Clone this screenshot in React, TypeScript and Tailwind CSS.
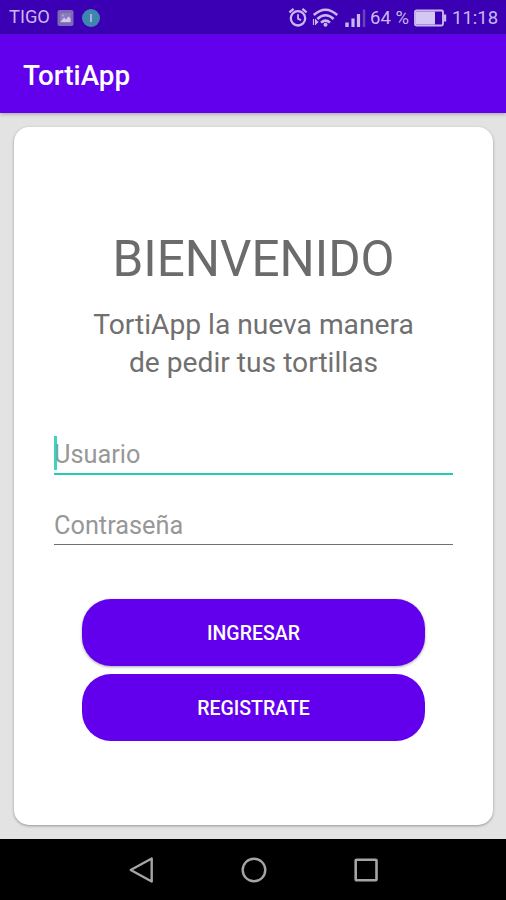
import { useState } from "react";

const StatusBar = () => {
  return (
    <div className="h-[34px] bg-[#3b00b3] text-[#c9b8f0] flex items-center pt-px text-[18px] leading-none">
      <span className="ml-[9px] w-[48px] whitespace-nowrap text-[18.3px]">TIGO</span>
      <svg width="17" height="16" viewBox="0 0 17 16" className="shrink-0">
        <rect x="0.5" y="0" width="16" height="16" rx="2" fill="#7d68b4" />
        <rect x="3" y="3" width="11" height="10" fill="#8c7ac0" />
        <path d="M3.5 12 L7 7.5 L9 9.5 L11.5 6.5 L13.5 8.5 V12 Z" fill="#d3c8ef" />
        <circle cx="6" cy="5.5" r="1" fill="#b5a5dd" />
      </svg>
      <svg width="18" height="18" viewBox="0 0 18 18" className="ml-[8px] shrink-0">
        <circle cx="9" cy="9" r="9" fill="#3f86ae" />
        <path d="M9 5 V13" stroke="#b9c4e6" strokeWidth="1.6" />
      </svg>

      {/* System icons */}
      <svg width="80" height="22" viewBox="0 0 80 22" fill="none" stroke="currentColor" className="ml-[187px] mb-px shrink-0">
        <circle cx="11" cy="12.3" r="7.2" strokeWidth="2.3" />
        <path d="M11 8.3 V12.6 L14 14.2" strokeWidth="1.8" />
        <path d="M2.4 6.4 L6.6 2.9 M19.6 6.4 L15.4 2.9" strokeWidth="2.2" />
        <path d="M26.8 9 Q38.5 -1.4 50.2 9" strokeWidth="2.5" />
        <path d="M30.4 13 Q38.5 5.4 46.6 13" strokeWidth="2.5" />
        <path d="M34 16.6 Q38.5 12.6 43 16.6" strokeWidth="2.5" />
        <circle cx="38.5" cy="18.7" r="2" fill="currentColor" stroke="none" />
        <path d="M26.5 13 V19" strokeWidth="1.2" />
        <path d="M28 12.5 L31.5 16 L28 19.5 Z" fill="currentColor" stroke="none" />
        <path d="M60 16.5 V21" strokeWidth="3.4" />
        <path d="M66 12.5 V21" strokeWidth="3.2" />
        <path d="M71.5 8 V21" strokeWidth="3.2" />
        <path d="M77 3.5 V21" strokeWidth="2.5" stroke="#6841c4" />
      </svg>
      <span className="ml-[3px] w-[44px] whitespace-nowrap text-[18.5px] pt-px">64 %</span>
      <svg width="33" height="18" viewBox="0 0 33 18" className="shrink-0">
        <rect x="1" y="1.5" width="28" height="15" rx="1.5" fill="none" stroke="currentColor" strokeWidth="1.9" />
        <rect x="2" y="2.5" width="19" height="13" fill="#d4c7f4" />
        <path d="M31 5.5 V12.5" stroke="currentColor" strokeWidth="2.4" />
      </svg>
      <span className="ml-[5px] whitespace-nowrap text-[18.5px] pt-px">11:18</span>
    </div>
  );
};

const NavigationBar = () => {
  return (
    <div className="h-[61px] bg-black flex items-center justify-center gap-[84.5px] pl-px">
      <button type="button" aria-label="Atrás">
        <svg width="28" height="28" viewBox="0 0 28 28" className="block">
          <path d="M3.7 14 L24.7 2.5 V25.5 Z" fill="none" stroke="#a5a5a5" strokeWidth="2.4" strokeLinejoin="round" />
        </svg>
      </button>
      <button type="button" aria-label="Inicio">
        <svg width="28" height="28" viewBox="0 0 28 28" className="block">
          <circle cx="14" cy="14" r="11.3" fill="none" stroke="#a5a5a5" strokeWidth="2.4" />
        </svg>
      </button>
      <button type="button" aria-label="Recientes">
        <svg width="28" height="28" viewBox="0 0 28 28" className="block">
          <rect x="3.7" y="3.7" width="20.8" height="20.6" rx="0.8" fill="none" stroke="#a5a5a5" strokeWidth="2.6" />
        </svg>
      </button>
    </div>
  );
};

const App = () => {
  const [usuario, setUsuario] = useState("");
  const [contrasena, setContrasena] = useState("");

  return (
    <div className="w-[506px] h-[900px] overflow-hidden flex flex-col bg-[#e3e3e3] font-[Roboto,sans-serif]">
      <StatusBar />
      <header className="h-[79px] shrink-0 bg-[#6200ee] flex items-center pl-[23px] pt-[4px] shadow-[0_1px_4px_rgba(0,0,0,0.3)]">
        <h1 className="text-white text-[27.8px] font-medium">TortiApp</h1>
      </header>

      <main className="flex-1 pt-[14px] pl-[14px] pr-[13px] pb-[14px]">
        <div className="h-full rounded-[15px] bg-white shadow-[0_1px_3px_rgba(0,0,0,0.35)] flex flex-col pt-[102px]">
          <h2 className="text-center text-[49.4px] leading-[60px] text-[#6b6b6b]">
            BIENVENIDO
          </h2>
          <p className="mt-[17px] text-center text-[28.2px] leading-[38px] text-[#707070]">
            TortiApp la nueva manera
            <br />
            de pedir tus tortillas
          </p>

          {/* Login form */}
          <form className="mt-[50px] px-[40px]" onSubmit={(e) => e.preventDefault()}>
            <div className="relative border-b-2 border-[#1fcdb3] h-[43px]">
              <input
                type="text"
                value={usuario}
                onChange={(e) => setUsuario(e.target.value)}
                placeholder="Usuario"
                className="block w-full h-[43px] pt-[2px] text-[25.3px] text-[#333] placeholder:text-[#979797] outline-none"
              />
              <span className="absolute left-0 top-[4px] w-[3px] h-[34px] bg-[#1fcdb3]/85" />
            </div>
            <div className="mt-[27px] border-b border-[#707070] h-[43px]">
              <input
                type="password"
                value={contrasena}
                onChange={(e) => setContrasena(e.target.value)}
                placeholder="Contraseña"
                className="block w-full h-[43px] pt-[3px] text-[25.3px] text-[#333] placeholder:text-[#979797] outline-none"
              />
            </div>
            <div className="mt-[54px] mx-[28px] flex flex-col gap-[7.5px]">
              <button
                type="submit"
                className="h-[67px] pt-[3px] rounded-[29px] bg-[#6200ee] text-white text-[19.5px] font-medium shadow-[0_1px_3px_rgba(0,0,0,0.35)]"
              >
                INGRESAR
              </button>
              <button
                type="button"
                className="h-[67px] pt-[3px] rounded-[29px] bg-[#6200ee] text-white text-[19.5px] font-medium"
              >
                REGISTRATE
              </button>
            </div>
          </form>
        </div>
      </main>

      <NavigationBar />
    </div>
  );
};

export default App;
